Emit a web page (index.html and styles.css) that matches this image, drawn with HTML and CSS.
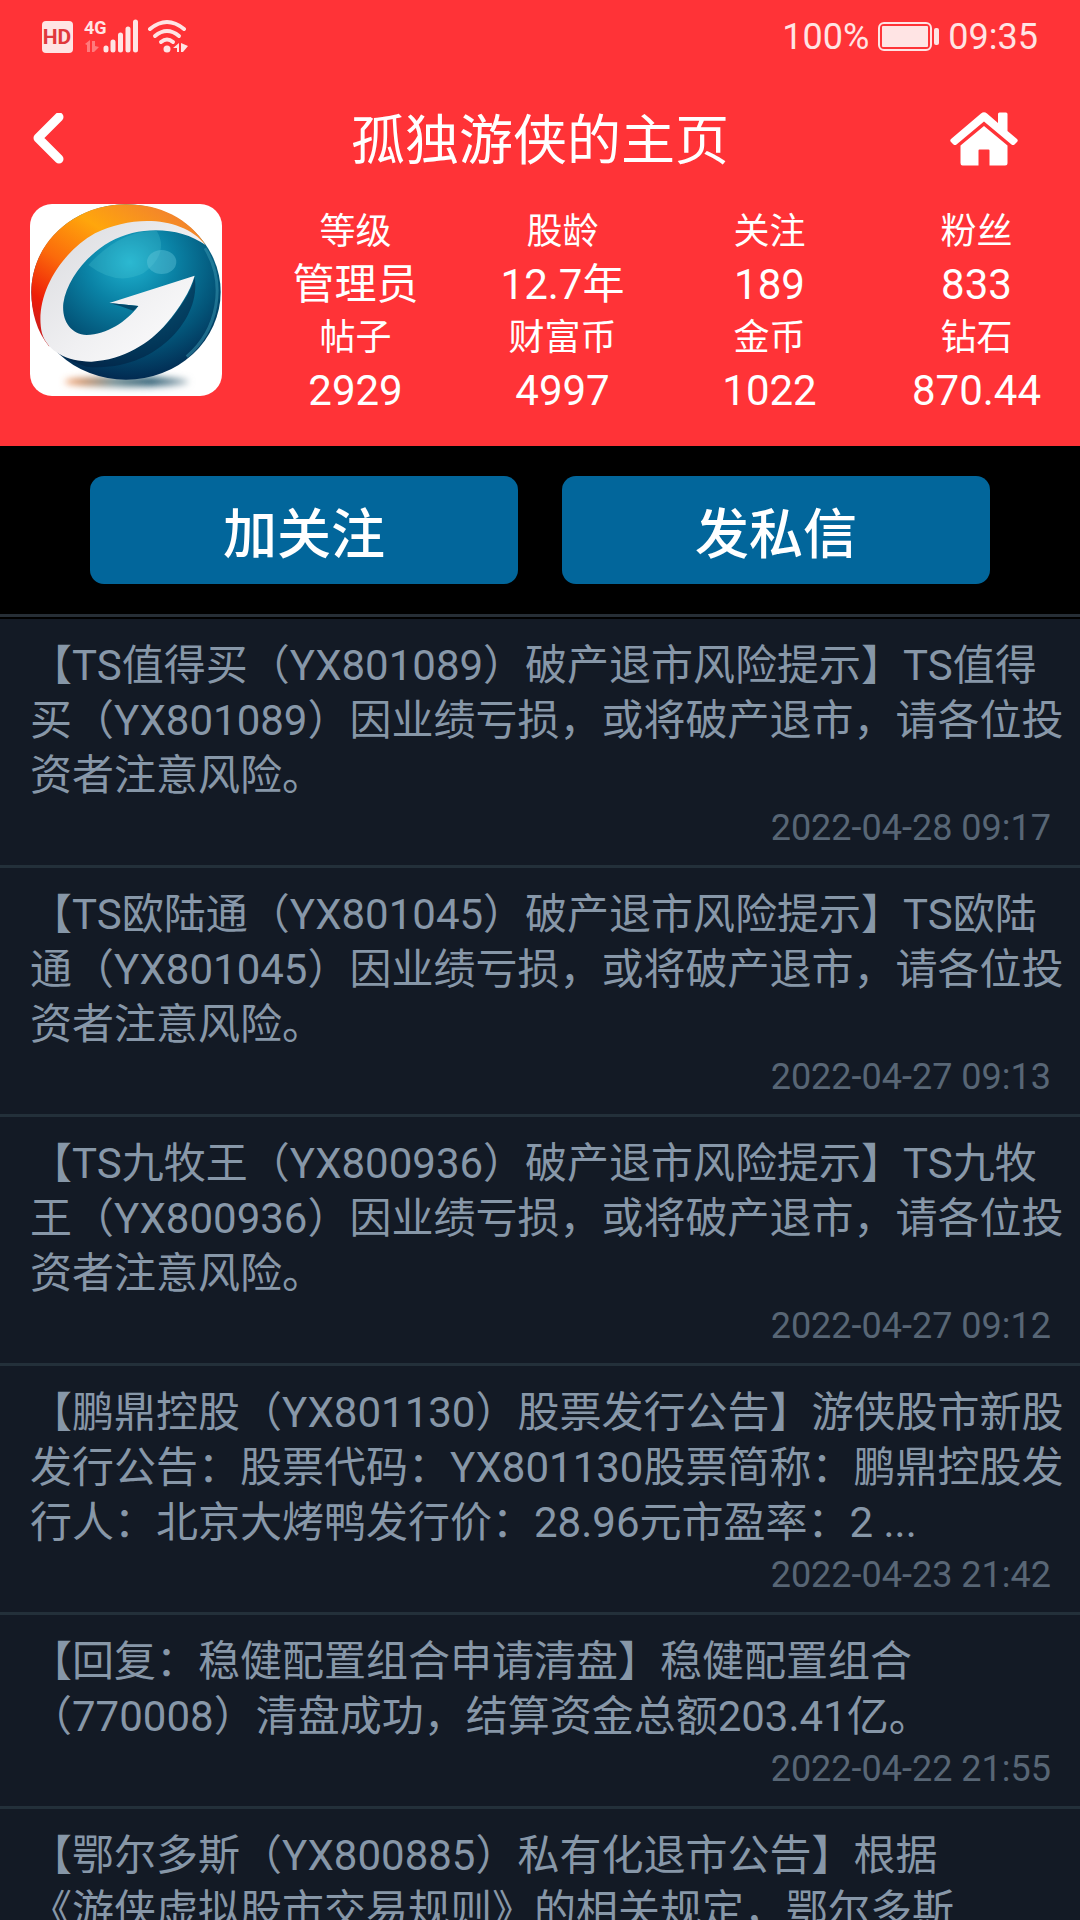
FILE: index.html
```html
<!DOCTYPE html>
<html lang="zh-CN">
  <head>
    <meta charset="UTF-8" />
    <title>孤独游侠的主页</title>
    <meta name="viewport" content="width=device-width, initial-scale=1.0" />
    <link rel="stylesheet" href="styles.css">
  </head>
  <body>
    <header class="header">
      <!-- Status bar -->
      <div class="status-bar">
        <svg class="status-icons" width="150" height="40" viewBox="0 0 150 40">
          <rect x="2" y="4" width="31" height="32" rx="4" fill="currentColor" />
          <text x="17" y="27" class="hd-text">HD</text>
          <text x="44" y="17" class="net-text">4G</text>
          <g fill="currentColor" opacity="0.4">
            <path d="M45 27l5-4v12h-3v-7z" />
            <path d="M52 24h3v5l4 1-5 5h-2z" />
          </g>
          <g stroke="currentColor" stroke-width="5" stroke-linecap="round">
            <path d="M66 31v2M73 25v8M80.500 18v15M88 12v21M95.500 5v28" />
          </g>
          <g
            fill="none"
            stroke="currentColor"
            stroke-width="4"
            stroke-linecap="round"
          >
            <path d="M110 12Q127 -2 144 12" />
            <path d="M115 19Q127 9 139 19" />
            <path d="M121 25Q127 20 133 25" />
          </g>
          <circle cx="127" cy="32" r="3.500" fill="currentColor" />
          <path
            d="M133 31l6-5v9h-2v-4zM141 26l7 3-5 6h-2z"
            fill="currentColor"
          />
        </svg>
        <div class="status-right">
          <span>100%</span>
          <svg width="61" height="30" viewBox="0 0 61 30">
            <rect
              x="1"
              y="1"
              width="52"
              height="27"
              rx="5"
              fill="none"
              stroke="currentColor"
              stroke-width="2"
            />
            <rect x="4" y="4" width="46" height="21" rx="1" fill="currentColor" />
            <rect x="56" y="6" width="5" height="17" rx="2" fill="currentColor" />
          </svg>
          <span>09:35</span>
        </div>
      </div>

      <!-- Title bar -->
      <nav class="nav">
        <button class="nav-button" type="button" aria-label="返回">
          <svg width="32" height="52" viewBox="0 0 32 52">
            <path
              d="M27 4L6 25L27 46"
              fill="none"
              stroke="#fff"
              stroke-width="9"
              stroke-linecap="round"
              stroke-linejoin="round"
            />
          </svg>
        </button>
        <h1>孤独游侠的主页</h1>
        <a class="nav-button nav-home" href="#" aria-label="首页">
          <svg width="68" height="54" viewBox="0 0 68 54">
            <path
              d="M31 1.500Q34 -1 37 1.500L48 11V2Q48 0.500 49.500 0.500H56Q57.500 0.500 57.500 2V19L67 27Q68.500 28.500 67 30L64.500 32.500Q63 33.500 61.500 32.500L34 9.500L6.500 32.500Q5 33.500 3.500 32.500L1 30Q-0.500 28.500 1 27Z"
              fill="#fff"
            />
            <path
              d="M34 14L57.500 33.500V51Q57.500 53.500 55 53.500H39.500V38.500Q39.500 37.500 38.500 37.500H29.500Q28.500 37.500 28.500 38.500V53.500H12.500Q10.500 53.500 10.500 51V33.500Z"
              fill="#fff"
            />
          </svg>
        </a>
      </nav>

      <!-- Profile -->
      <section class="profile">
        <svg class="avatar" viewBox="30 42 576 576" role="img" aria-label="头像">
          <defs>
            <radialGradient id="sphere" cx="0.52" cy="0.33" r="0.68">
              <stop offset="0" stop-color="#1fb2cf" />
              <stop offset="0.35" stop-color="#0a82a5" />
              <stop offset="0.7" stop-color="#035478" />
              <stop offset="1" stop-color="#02284f" />
            </radialGradient>
            <linearGradient id="flame" x1="0.9" y1="0" x2="0.1" y2="1">
              <stop offset="0" stop-color="#ef7a35" />
              <stop offset="0.35" stop-color="#ffa60c" />
              <stop offset="0.6" stop-color="#fb6a0b" />
              <stop offset="0.82" stop-color="#ee1d08" />
              <stop offset="1" stop-color="#c51c20" />
            </linearGradient>
            <linearGradient id="swoosh" x1="0" y1="0" x2="1" y2="1">
              <stop offset="0" stop-color="#d9dade" />
              <stop offset="0.55" stop-color="#f0f0f2" />
              <stop offset="1" stop-color="#fff" />
            </linearGradient>
            <linearGradient id="ground" x1="0" y1="0" x2="1" y2="0">
              <stop offset="0" stop-color="#f0803c" />
              <stop offset="0.4" stop-color="#6d8a90" />
              <stop offset="0.7" stop-color="#285a70" />
              <stop offset="1" stop-color="#8fa3ae" />
            </linearGradient>
            <filter id="soft" x="-20%" y="-80%" width="140%" height="260%">
              <feGaussianBlur stdDeviation="11" />
            </filter>
          </defs>
          <rect x="30" y="42" width="576" height="576" fill="#fff" />
          <ellipse cx="320" cy="575" rx="185" ry="15" fill="url(#ground)" filter="url(#soft)" />
          <ellipse cx="318" cy="306" rx="284" ry="263" fill="url(#sphere)" />
          <path
            d="M557 165C505 85 420 43 318 43C160 43 34 160 34 306C34 365 50 425 88 470C50 340 130 190 250 125C350 78 480 90 557 165Z"
            fill="url(#flame)"
          />
          <path
            d="M118 490C220 545 370 490 455 385C490 340 515 300 524 262C545 390 400 550 200 530Q150 515 118 490Z"
            fill="#021c3c"
            opacity="0.5"
          />
          <path
            d="M557 165C490 80 340 72 225 130C110 195 42 330 66 430C82 485 145 516 215 515C310 510 390 460 440 400C480 352 510 305 524 257L268 339L355 348C320 395 260 434 200 435C150 432 125 390 130 340C140 270 200 195 270 155C360 105 480 110 557 165Z"
            fill="url(#swoosh)"
          />
          <path d="M268 339L355 348L340 362Q305 348 268 339Z" fill="#02486a" />
          <path
            d="M205 225Q300 120 410 122Q450 190 370 250Q290 290 205 225Z"
            fill="#5cd0dc"
            opacity="0.22"
          />
          <ellipse cx="425" cy="216" rx="44" ry="36" fill="#6dcbdc" opacity="0.38" />
          <path
            d="M555 175C620 280 595 420 500 500"
            fill="none"
            stroke="#3a97b2"
            stroke-width="9"
            opacity="0.5"
          />
        </svg>
        <dl class="stats">
          <div class="stat">
            <dt>等级</dt>
            <dd>管理员</dd>
          </div>
          <div class="stat">
            <dt>股龄</dt>
            <dd>12.7年</dd>
          </div>
          <div class="stat">
            <dt>关注</dt>
            <dd>189</dd>
          </div>
          <div class="stat">
            <dt>粉丝</dt>
            <dd>833</dd>
          </div>
          <div class="stat">
            <dt>帖子</dt>
            <dd>2929</dd>
          </div>
          <div class="stat">
            <dt>财富币</dt>
            <dd>4997</dd>
          </div>
          <div class="stat">
            <dt>金币</dt>
            <dd>1022</dd>
          </div>
          <div class="stat">
            <dt>钻石</dt>
            <dd>870.44</dd>
          </div>
        </dl>
      </section>
    </header>

    <!-- Actions -->
    <div class="actions">
      <button class="button" type="button">加关注</button>
      <button class="button" type="button">发私信</button>
    </div>

    <!-- Posts -->
    <ul class="posts">
      <li class="post">
        <p>【TS值得买（YX801089）破产退市风险提示】TS值得买（YX801089）因业绩亏损，或将破产退市，请各位投资者注意风险。</p>
        <time datetime="2022-04-28T09:17">2022-04-28 09:17</time>
      </li>
      <li class="post">
        <p>【TS欧陆通（YX801045）破产退市风险提示】TS欧陆通（YX801045）因业绩亏损，或将破产退市，请各位投资者注意风险。</p>
        <time datetime="2022-04-27T09:13">2022-04-27 09:13</time>
      </li>
      <li class="post">
        <p>【TS九牧王（YX800936）破产退市风险提示】TS九牧王（YX800936）因业绩亏损，或将破产退市，请各位投资者注意风险。</p>
        <time datetime="2022-04-27T09:12">2022-04-27 09:12</time>
      </li>
      <li class="post">
        <p>【鹏鼎控股（YX801130）股票发行公告】游侠股市新股发行公告：股票代码：YX801130股票简称：鹏鼎控股发行人：北京大烤鸭发行价：28.96元市盈率：2 ...</p>
        <time datetime="2022-04-23T21:42">2022-04-23 21:42</time>
      </li>
      <li class="post">
        <p>【回复：稳健配置组合申请清盘】稳健配置组合<br />（770008）清盘成功，结算资金总额203.41亿。</p>
        <time datetime="2022-04-22T21:55">2022-04-22 21:55</time>
      </li>
      <li class="post">
        <p>【鄂尔多斯（YX800885）私有化退市公告】根据<br />《游侠虚拟股市交易规则》的相关规定，鄂尔多斯</p>
      </li>
    </ul>
  </body>
</html>
```

FILE: styles.css
```css
* {
  box-sizing: border-box;
}
body {
  margin: 0;
  height: 100vh;
  display: flex;
  flex-direction: column;
  overflow: hidden;
  background-color: #131a25;
  color: #fff;
  font-family: Roboto, "Noto Sans CJK SC", sans-serif;
  font-size: 42px;
  text-spacing-trim: space-all;
}
h1,
p,
dl,
dd,
ul {
  margin: 0;
  padding: 0;
}
button {
  border: none;
  font-family: inherit;
  color: inherit;
  cursor: pointer;
}
.header {
  flex-shrink: 0;
  background-color: #ff3337;
}
.status-bar {
  display: flex;
  justify-content: space-between;
  align-items: center;
  height: 74px;
  padding: 0 42px 0 40px;
  color: #ffe4e4;
}
.status-right {
  display: flex;
  align-items: center;
  gap: 9px;
  font-size: 36px;
  line-height: 40px;
}
.hd-text {
  font-size: 21px;
  font-weight: 700;
  text-anchor: middle;
  fill: #e0383c;
}
.net-text {
  font-size: 18px;
  font-weight: 700;
  fill: currentColor;
}
.nav {
  display: grid;
  grid-template-columns: 1fr auto 1fr;
  align-items: center;
  height: 130px;
  padding: 0 32px;
}
h1 {
  padding-top: 6px;
  font-size: 54px;
  font-weight: 400;
  line-height: 64px;
}
.nav-button {
  display: flex;
  justify-self: start;
  padding: 0;
  background: none;
}
.nav-home {
  justify-self: end;
  margin-right: 30px;
}
.profile {
  display: flex;
  padding: 0 0 30px 30px;
}
.avatar {
  flex-shrink: 0;
  width: 192px;
  height: 192px;
  margin-right: 30px;
  border-radius: 22px;
}
.stats {
  flex: 1;
  display: grid;
  grid-template-columns: repeat(4, 1fr);
  text-align: center;
}
.stat dt {
  padding-top: 2px;
  font-size: 36px;
  line-height: 53px;
}
.stat dd {
  line-height: 51px;
}
.actions {
  flex-shrink: 0;
  display: flex;
  gap: 44px;
  padding: 30px 90px;
  background-color: #000;
}
.button {
  flex: 1;
  height: 108px;
  padding: 0;
  border-radius: 14px;
  background-color: #02669b;
  font-size: 54px;
  font-weight: 500;
}
.button:active {
  background-color: #01557f;
}
.posts {
  flex: 1;
  min-height: 0;
  overflow-y: auto;
  scrollbar-width: none;
  list-style: none;
  border-top: 3px solid #262e36;
}
.post {
  padding: 19px 14px 13px 30px;
  border-bottom: 3px solid #23303a;
  color: #8797a8;
}
.post:first-child {
  border-top: 2px solid #000;
}
.post p {
  line-height: 55px;
}
.post time {
  display: block;
  padding: 1px 15px 0 0;
  text-align: right;
  font-size: 36px;
  line-height: 48px;
  color: #586675;
}
```
